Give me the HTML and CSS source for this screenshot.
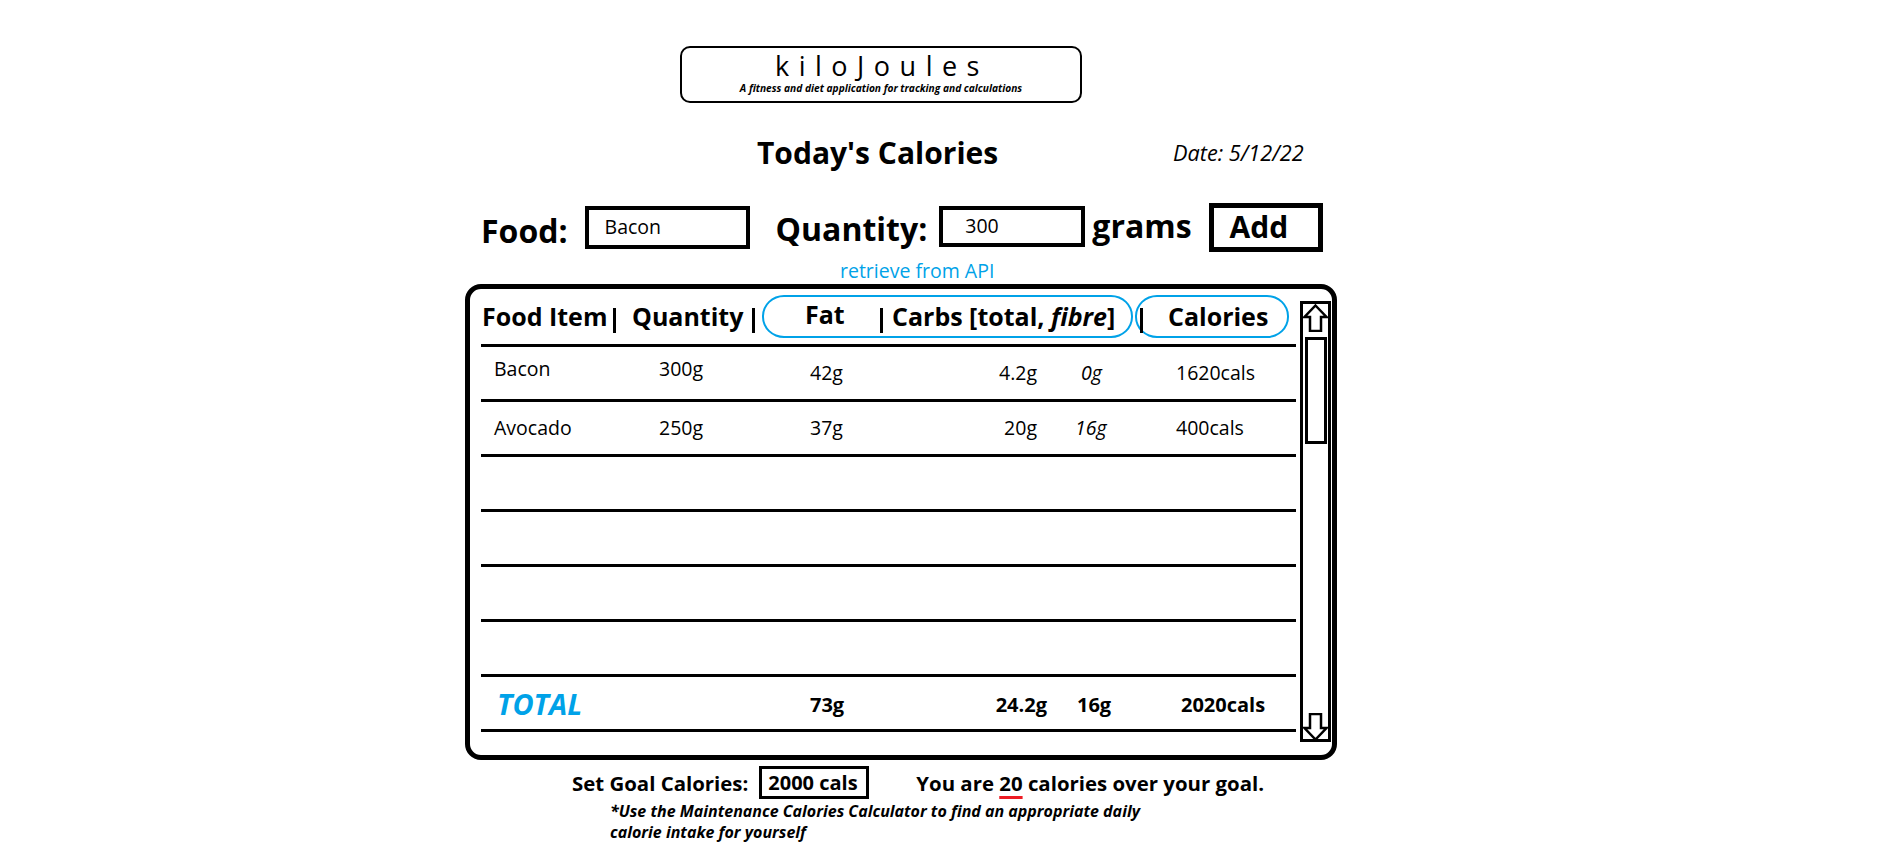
FILE: index.html
```html
<!DOCTYPE html>
<html>
<head>
<meta charset="utf-8">
<title>kiloJoules</title>
<link rel="stylesheet" href="styles.css">
</head>
<body>
<div class="page">
  <header class="logo">
    <div class="logo-name">kiloJoules</div>
    <div class="logo-sub">A fitness and diet application for tracking and calculations</div>
  </header>

  <div class="title-row">
    <h1 class="title">Today's Calories</h1>
    <div class="date">Date: 5/12/22</div>
  </div>

  <div class="entry-row">
    <span class="label label-food">Food:</span>
    <div class="field field-food">Bacon</div>
    <span class="label label-qty">Quantity:</span>
    <div class="field field-qty">300</div>
    <span class="label label-grams">grams</span>
    <div class="add-btn">Add</div>
  </div>

  <div class="api-note">retrieve from API</div>

  <section class="table-box">
    <div class="table">
      <div class="thead">
        <div class="h-food">Food Item</div>
        <div class="bar"></div>
        <div class="h-qty">Quantity</div>
        <div class="bar"></div>
        <div class="oval oval-macro">
          <div class="h-fat">Fat</div>
          <div class="bar"></div>
          <div class="h-carbs">Carbs [total, <em>fibre</em>]</div>
        </div>
        <div class="oval oval-cal">
          <div class="bar"></div>
          <div class="h-cal">Calories</div>
        </div>
      </div>

      <div class="row">
        <div class="c c1 hi">Bacon</div>
        <div class="c c2 hi">300g</div>
        <div class="c c3">42g</div>
        <div class="c c4">4.2g</div>
        <div class="c c5 c5-a"><em>0g</em></div>
        <div class="c c6">1620cals</div>
      </div>
      <div class="row">
        <div class="c c1">Avocado</div>
        <div class="c c2">250g</div>
        <div class="c c3">37g</div>
        <div class="c c4">20g</div>
        <div class="c c5"><em>16g</em></div>
        <div class="c c6">400cals</div>
      </div>
      <div class="row"></div>
      <div class="row"></div>
      <div class="row"></div>
      <div class="row"></div>
      <div class="row total">
        <div class="c c1 total-label">TOTAL</div>
        <div class="c c2"></div>
        <div class="c c3">73g</div>
        <div class="c c4">24.2g</div>
        <div class="c c5">16g</div>
        <div class="c c6">2020cals</div>
      </div>
    </div>

    <div class="scrollbar">
      <svg class="arrow" width="25" height="28" viewBox="0 0 25 28"><path d="M12.5 1.5 L23.5 13 L18 13 L18 27 L7 27 L7 13 L1.5 13 Z" fill="none" stroke="#000" stroke-width="2.5" stroke-linejoin="miter"/></svg>
      <div class="thumb"></div>
      <svg class="arrow arrow-down" width="25" height="28" viewBox="0 0 25 28"><path d="M7 1 L18 1 L18 15 L23.5 15 L12.5 26.5 L1.5 15 L7 15 Z" fill="none" stroke="#000" stroke-width="2.5" stroke-linejoin="miter"/></svg>
    </div>
  </section>

  <div class="goal-row">
    <span class="goal-label">Set Goal Calories:</span>
    <div class="goal-box">2000 cals</div>
    <span class="goal-msg">You are <span class="over">20</span> calories over your goal.</span>
  </div>
  <p class="hint">*Use the Maintenance Calories Calculator to find an appropriate daily<br>calorie intake for yourself</p>
</div>
</body>
</html>
```

FILE: styles.css
```css
* { box-sizing: border-box; }

html, body {
  margin: 0;
  padding: 0;
  background: #fff;
}

body {
  font-family: "Open Sans", "Noto Sans", "Liberation Sans", sans-serif;
  color: #000;
}

.page {
  width: 872px;
  margin-left: 465px;
  padding-top: 46px;
}

/* Logo */
.logo {
  margin-left: 215px;
  width: 402px;
  height: 57px;
  border: 2px solid #000;
  border-radius: 10px;
  text-align: center;
  padding-top: 3px;
}
.logo-name {
  font-size: 27px;
  font-weight: 400;
  line-height: 30px;
  letter-spacing: 9.5px;
  padding-left: 2px;
}
.logo-sub {
  font-size: 10.2px;
  font-weight: 700;
  font-style: italic;
  line-height: 14px;
}

/* Title */
.title-row {
  display: flex;
  align-items: flex-start;
  margin-top: 30px;
  height: 40px;
}
.title {
  margin: 0 0 0 292px;
  width: 416px;
  font-size: 30px;
  font-weight: 700;
  line-height: 40px;
}
.date {
  margin-top: 7px;
  font-size: 21.7px;
  font-style: italic;
  line-height: 26px;
}

/* Entry row */
.entry-row {
  display: flex;
  align-items: center;
  margin-top: 30px;
  height: 49px;
  padding-left: 16px;
}
.label {
  font-size: 32px;
  font-weight: 700;
  line-height: 49px;
}
.label-food { margin-top: 6px; }
.label-qty { margin-left: 26px; margin-top: 1px; }
.label-grams { margin-left: 7px; margin-top: -4px; }
.field {
  border: 4px solid #000;
  font-size: 19.5px;
  line-height: 33px;
}
.field-food {
  margin-left: 17px;
  width: 165px;
  height: 43px;
  padding-left: 16px;
}
.field-qty {
  margin-left: 12px;
  width: 146px;
  height: 41px;
  line-height: 32px;
  padding-left: 22px;
  margin-top: -2px;
}
.add-btn {
  margin-left: 17px;
  width: 114px;
  height: 49px;
  border: 5px solid #000;
  font-size: 30px;
  font-weight: 700;
  line-height: 37px;
  padding-left: 16px;
}

.api-note {
  margin: 8px 0 0 375px;
  font-size: 19.5px;
  line-height: 22px;
  color: #00a2e8;
}

/* Table */
.table-box {
  margin-top: 2px;
  height: 476px;
  border: 5px solid #000;
  border-radius: 16px;
  display: flex;
  padding: 6px 1px 0 11px;
}
.table {
  width: 815px;
  margin-right: 4px;
}
.thead {
  display: flex;
  align-items: flex-start;
  height: 52px;
  border-bottom: 3px solid #000;
  font-size: 25px;
  font-weight: 700;
  line-height: 43px;
}
.thead > div { flex: none; }
.bar {
  width: 3px;
  height: 25px;
  background: #000;
  margin-top: 13px;
}
.h-food { width: 132px; padding-left: 1px; }
.h-qty { width: 120px; margin-left: 16px; }
.oval {
  display: flex;
  align-items: flex-start;
  height: 43px;
  border: 2px solid #00a2e8;
  border-radius: 22px / 21px;
  line-height: 39px;
}
.oval .bar { margin-top: 11px; }
.oval-macro {
  width: 371px;
  margin-left: 7px;
  padding-left: 41px;
}
.h-fat { width: 75px; line-height: 35px; }
.h-carbs { margin-left: 9px; white-space: nowrap; }
.h-carbs em { font-style: italic; }
.oval-cal {
  width: 154px;
  margin-left: 2px;
  padding-left: 3px;
}
.h-cal { margin-left: 25px; }

.row {
  display: grid;
  grid-template-columns: 178px 151px 169px 58px 139px 120px;
  height: 55px;
  border-bottom: 3px solid #000;
  font-size: 19.5px;
  line-height: 52px;
}
.c { white-space: nowrap; }
.c1 { padding-left: 13px; }
.c4 { text-align: right; }
.c5 { padding-left: 38px; }
.c5-a { padding-left: 44px; }
.c5 em { font-style: italic; }
.hi { line-height: 44px; }

.total {
  font-weight: 700;
  font-size: 20px;
  line-height: 56px;
}
.total .c1 { padding-left: 16px; }
.total .c4 { text-align: right; margin-right: -10px; }
.total .c5 { padding-left: 40px; }
.total .c6 { padding-left: 5px; }
.total-label {
  color: #00a2e8;
  font-style: italic;
  font-size: 29px;
  line-height: 53px;
}

.scrollbar {
  flex: none;
  width: 31px;
  height: 441px;
  margin-top: 6px;
  border: 3px solid #000;
  display: flex;
  flex-direction: column;
  align-items: center;
}
.arrow { display: block; flex: none; }
.thumb {
  width: 22px;
  height: 107px;
  border: 3px solid #000;
  margin-top: 5px;
}
.arrow-down {
  margin-top: auto;
  margin-bottom: -2px;
}

/* Footer */
.goal-row {
  display: flex;
  align-items: center;
  margin-top: 6px;
  padding-left: 107px;
  height: 33px;
  font-size: 20.4px;
  font-weight: 700;
}
.goal-box {
  margin-left: 11px;
  width: 110px;
  height: 33px;
  border: 3px solid #000;
  padding-left: 6px;
  line-height: 27px;
  font-size: 20px;
}
.goal-msg { margin-left: 47px; }
.over {
  text-decoration: underline;
  text-decoration-color: #ed1c24;
  text-decoration-thickness: 3px;
  text-underline-offset: 5px;
}
.hint {
  margin: 2px 0 0 145px;
  font-size: 16px;
  font-weight: 700;
  font-style: italic;
  line-height: 21px;
}
```
